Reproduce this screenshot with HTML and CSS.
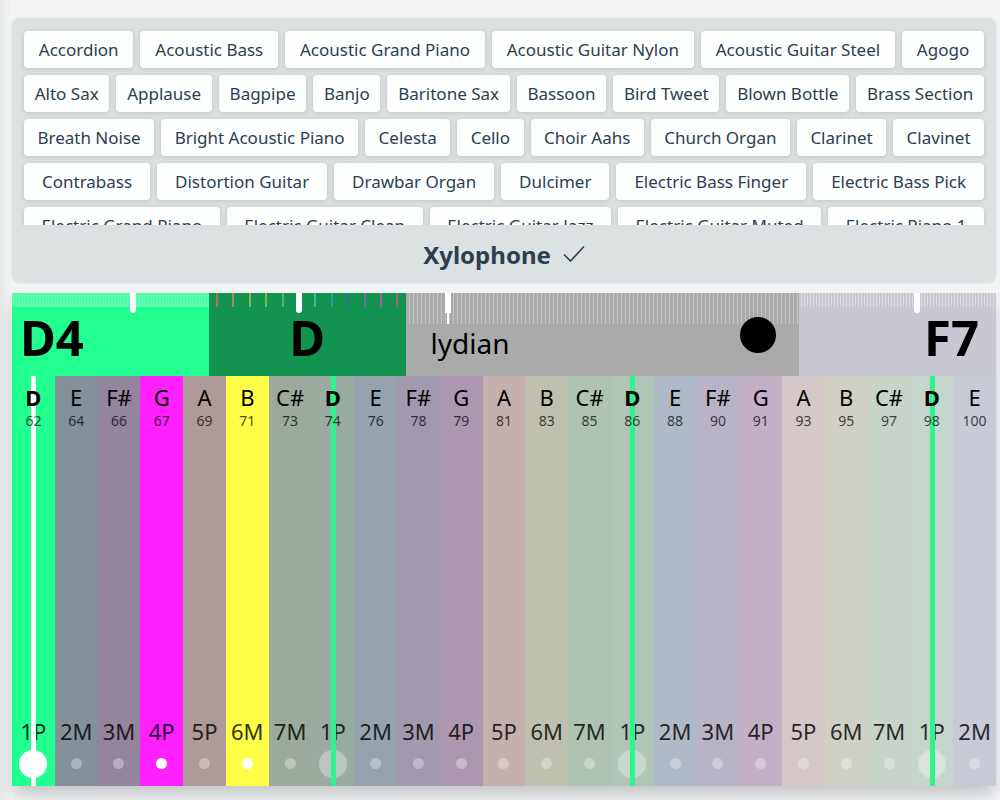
FILE: index.html
```html
<!DOCTYPE html>
<html lang="en">
<head>
<meta charset="utf-8">
<meta name="viewport" content="width=device-width, initial-scale=1">
<title>Scale player</title>
<link rel="stylesheet" href="styles.css">
</head>
<body>
<main class="page">
  <section class="chooser" aria-label="Instrument">
    <div class="instruments">
      <button class="instrument">Accordion</button>
      <button class="instrument">Acoustic Bass</button>
      <button class="instrument">Acoustic Grand Piano</button>
      <button class="instrument">Acoustic Guitar Nylon</button>
      <button class="instrument">Acoustic Guitar Steel</button>
      <button class="instrument">Agogo</button>
      <button class="instrument">Alto Sax</button>
      <button class="instrument">Applause</button>
      <button class="instrument">Bagpipe</button>
      <button class="instrument">Banjo</button>
      <button class="instrument">Baritone Sax</button>
      <button class="instrument">Bassoon</button>
      <button class="instrument">Bird Tweet</button>
      <button class="instrument">Blown Bottle</button>
      <button class="instrument">Brass Section</button>
      <button class="instrument">Breath Noise</button>
      <button class="instrument">Bright Acoustic Piano</button>
      <button class="instrument">Celesta</button>
      <button class="instrument">Cello</button>
      <button class="instrument">Choir Aahs</button>
      <button class="instrument">Church Organ</button>
      <button class="instrument">Clarinet</button>
      <button class="instrument">Clavinet</button>
      <button class="instrument">Contrabass</button>
      <button class="instrument">Distortion Guitar</button>
      <button class="instrument">Drawbar Organ</button>
      <button class="instrument">Dulcimer</button>
      <button class="instrument">Electric Bass Finger</button>
      <button class="instrument">Electric Bass Pick</button>
      <button class="instrument">Electric Grand Piano</button>
      <button class="instrument">Electric Guitar Clean</button>
      <button class="instrument">Electric Guitar Jazz</button>
      <button class="instrument">Electric Guitar Muted</button>
      <button class="instrument">Electric Piano 1</button>
    </div>
    <button class="current">
      Xylophone
      <svg class="check" viewBox="0 0 22 18" aria-hidden="true"><path d="M1 9.500 L7.500 16 L21 1.500"/></svg>
    </button>
  </section>

  <section class="player" aria-label="Scale">
    <header class="controls">
      <div class="control low">
        <input class="slider" type="range" min="0" max="1000" value="618" aria-label="Lowest note">
        <span class="value">D4</span>
      </div>
      <div class="control tonic">
        <div class="pitches" aria-hidden="true"></div>
        <input class="slider" type="range" min="0" max="1000" value="456" aria-label="Tonic">
        <span class="value">D</span>
      </div>
      <div class="control mode">
        <input class="slider slider-long" type="range" min="0" max="1000" value="102" aria-label="Scale">
        <span class="mode-name">lydian</span>
        <span class="dial"></span>
      </div>
      <div class="control high">
        <input class="slider" type="range" min="0" max="1000" value="604" aria-label="Highest note">
        <span class="value">F7</span>
      </div>
    </header>
    <div class="keys" id="keys"></div>
  </section>
</main>
<script src="keys.js"></script>
</body>
</html>
```

FILE: styles.css
```css
*, *::before, *::after { box-sizing: border-box; }

body {
  margin: 0;
  font-family: "Noto Sans", "Open Sans", sans-serif;
  color: #2c3e50;
  background: linear-gradient(90deg, #e5e7e9, #f2f4f6 12px);
}

button {
  font: inherit;
  color: inherit;
  border: 0;
  margin: 0;
  cursor: pointer;
}

.page {
  display: flex;
  flex-direction: column;
  gap: 10px;
  min-height: 100vh;
  padding: 18px 4px 14px 12px;
}

/* Instrument chooser */
.chooser {
  display: flex;
  flex-direction: column;
  border-radius: 8px;
  background: #dce1e2;
  box-shadow: 0 0 3px #dce1e2;
}

.instruments {
  display: flex;
  flex-wrap: wrap;
  gap: 7px;
  height: 207px;
  padding: 13px 12px 0;
  overflow: hidden;
}

.instrument {
  flex: 1 1 auto;
  height: 37px;
  padding: 0 10px;
  border-radius: 4px;
  background: #fdfefe;
  box-shadow: 0 1px 5px rgba(0, 0, 0, 0.14);
  font-size: 17px;
  line-height: 24px;
  white-space: nowrap;
}

.current {
  display: flex;
  align-items: center;
  justify-content: center;
  gap: 12px;
  height: 58px;
  background: none;
  font-size: 24px;
  font-weight: 700;
}

.check {
  width: 22px;
  height: 18px;
  fill: none;
  stroke: #2c3e50;
  stroke-width: 1.6;
}

/* Player */
.player {
  display: flex;
  flex: 1;
  flex-direction: column;
  color: #000;
  box-shadow: 0 10px 16px -2px rgba(0, 0, 0, 0.2);
}

.controls {
  display: grid;
  grid-template-columns: 1fr 1fr 2fr 1fr;
}

.control {
  position: relative;
  display: flex;
  align-items: center;
  height: 83px;
}

.value {
  padding-top: 5px;
  font-size: 49px;
  font-weight: 700;
  line-height: 48px;
}

.low {
  padding-left: 8px;
  background: #20ff90;
}

.tonic {
  justify-content: center;
  background: #12934f;
}

.mode {
  justify-content: space-between;
  padding: 0 23px;
  background: #aaa;
}

.mode-name {
  padding: 17px 2px 0;
  font-size: 28px;
  line-height: 36px;
}

.dial {
  z-index: 1;
  width: 36px;
  height: 36px;
  border-radius: 50%;
  background: #000;
}

.high {
  justify-content: flex-end;
  padding-right: 17px;
  background: #c8c8d2;
}

/* Sliders lie along the top edge of each control */
.slider {
  position: absolute;
  inset: 0 0 auto;
  width: 100%;
  height: 20px;
  margin: 0;
  appearance: none;
  background: none;
}

.slider::-webkit-slider-thumb {
  appearance: none;
  width: 6px;
  height: 20px;
  border-radius: 0 0 3px 3px;
  background: #fff;
}

.low .slider {
  background: repeating-linear-gradient(90deg, #59ffad 0 2px, #53f8a6 2px 3px) top / 100% 14px no-repeat;
}

.high .slider {
  background: repeating-linear-gradient(90deg, transparent 0 2px, rgba(255, 255, 255, 0.35) 2px 3px) top / 100% 14px no-repeat;
}

.slider-long {
  height: 31px;
  background: repeating-linear-gradient(90deg, transparent 0 3px, rgba(255, 255, 255, 0.3) 3px 4px);
}

.slider-long::-webkit-slider-thumb {
  height: 31px;
  border-radius: 0;
  background:
    linear-gradient(#fff, #fff) top / 6px 20px no-repeat,
    linear-gradient(#fff, #fff) center / 2px 31px no-repeat;
}

.pitches {
  position: absolute;
  inset: 0 0 auto;
  display: flex;
  justify-content: space-around;
  height: 14px;
}

.pitch {
  width: 2px;
}

/* Keys */
.keys {
  display: flex;
  flex: 1;
}

.key {
  position: relative;
  display: flex;
  flex: 1 1 0;
  flex-direction: column;
  align-items: center;
  min-width: 0;
  padding: 7px 0 8px;
}

.note {
  z-index: 1;
  font-size: 22px;
  line-height: 28px;
}

.number {
  z-index: 1;
  flex: 1;
  font-size: 14px;
  line-height: 20px;
  opacity: 0.7;
}

.interval {
  font-size: 22px;
  line-height: 28px;
  opacity: 0.8;
}

.dot {
  width: 11px;
  height: 11px;
  margin: 13px 0 9px;
  border-radius: 50%;
  background: rgba(255, 255, 255, 0.32);
}

.key-root .note { font-weight: 700; }

.key-root .dot {
  width: 28px;
  height: 28px;
  margin: 5px 0 0;
}

.key-on .dot { background: #fff; }

/* Stripe through every root key */
.key-root::after {
  content: "";
  position: absolute;
  inset: 0 auto 0 50%;
  width: 5px;
  margin-left: -2px;
  background: #2cf58e;
}

.key-on.key-root::after { background: #fff; }
```

FILE: keys.js
```javascript
const keys = [
  ["D", 62, "1P", "#20ff90", true], ["E", 64, "2M", "#84919b"], ["F#", 66, "3M", "#92859d"],
  ["G", 67, "4P", "#ff20ff", true], ["A", 69, "5P", "#ae9b99"], ["B", 71, "6M", "#ffff48", true],
  ["C#", 73, "7M", "#9baa9c"], ["D", 74, "1P", "#9aac9f"], ["E", 76, "2M", "#96a3ad"],
  ["F#", 78, "3M", "#a199ad"], ["G", 79, "4P", "#ab98ae"], ["A", 81, "5P", "#c4b0af"],
  ["B", 83, "6M", "#c0c0b0"], ["C#", 85, "7M", "#b0c3b3"], ["D", 86, "1P", "#b0c5b8"],
  ["E", 88, "2M", "#b0bac6"], ["F#", 90, "3M", "#b8b3c5"], ["G", 91, "4P", "#c2b0c4"],
  ["A", 93, "5P", "#d5c8c8"], ["B", 95, "6M", "#d1d0c6"], ["C#", 97, "7M", "#c8d4c9"],
  ["D", 98, "1P", "#c7d6cc"], ["E", 100, "2M", "#c8cbd5"],
];

document.getElementById("keys").innerHTML = keys.map(([note, number, interval, color, on]) =>
  `<button class="key${note === "D" ? " key-root" : ""}${on ? " key-on" : ""}" style="background:${color}">
    <span class="note">${note}</span>
    <span class="number">${number}</span>
    <span class="interval">${interval}</span>
    <span class="dot"></span>
  </button>`).join("");

const pitches = ["#b5704f", "#a88a55", "#8fb45c", "#7cbc58", "#55b45c", "#3cc878",
  "#40b69a", "#3a92a8", "#3a68a8", "#8064b0", "#9a62a8", "#a86468"];

document.querySelector(".pitches").innerHTML = pitches
  .map(color => `<span class="pitch" style="background:${color}"></span>`).join("");
```
